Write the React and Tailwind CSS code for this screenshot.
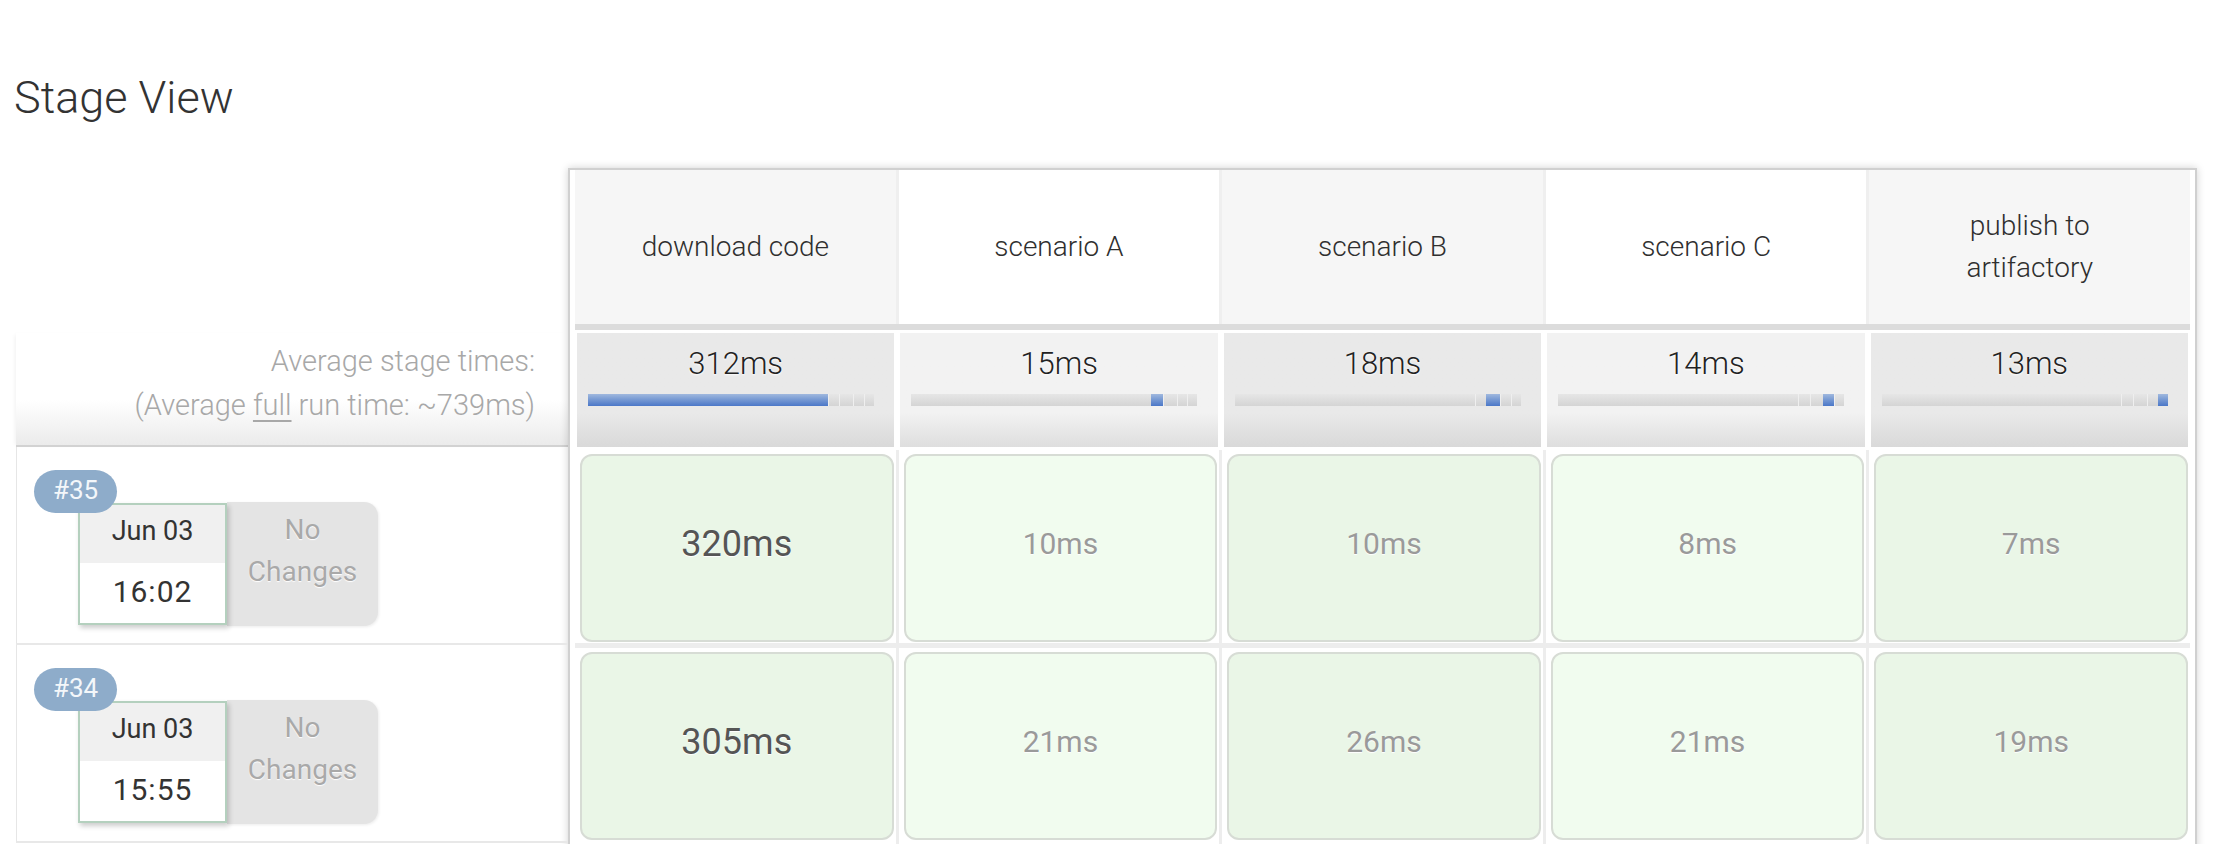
import React from "react";

const stages = [["download code"], ["scenario A"], ["scenario B"], ["scenario C"], ["publish to", "artifactory"]];
const avgs = [312, 15, 18, 14, 13];
const avgLabels = ["312ms", "15ms", "18ms", "14ms", "13ms"];
const total = avgs.reduce((a, b) => a + b, 0);

const runs = [
  { id: "#35", date: "Jun 03", time: "16:02", vals: ["320ms", "10ms", "10ms", "8ms", "7ms"], h: "h-[193px]", pb: "pb-[1px]" },
  { id: "#34", date: "Jun 03", time: "15:55", vals: ["305ms", "21ms", "26ms", "21ms", "19ms"], h: "h-[198px]", pb: "pb-[6px]" },
];

function Bar({ index }) {
  return (
    <div className="mt-[15px] ml-[11px] w-[286px] h-[12px] flex overflow-hidden">
      {avgs.map((v, i) => (
        <div
          key={i}
          style={{ width: `${(v / total) * 100}%` }}
          className={
            i === index
              ? "h-full bg-linear-to-b from-[#a0b8de] via-[#7497d2] to-[#4b77c8]"
              : i === 0
              ? "h-full bg-linear-to-b from-[#e6e6e6] to-[#d4d4d4]"
              : "h-full border-l border-[#efefef] bg-linear-to-b from-[#e6e6e6] to-[#d4d4d4]"
          }
        />
      ))}
    </div>
  );
}

function LeftRow({ run }) {
  return (
    <div className="relative h-[198px] border-l border-[#e6e6e6] border-b-2 border-b-[#e8e8e8]">
      <div className="flex ml-[61px] mt-[56px]">
        <div className="w-[149px] h-[122px] border-2 border-[#b4d0be] flex flex-col shadow-[2px_3px_5px_rgba(0,0,0,0.2)] relative z-10 bg-white">
          <div className="h-[58px] bg-[#f0f0f0] flex items-center justify-center pb-[5px] text-[27px] leading-[27px] text-[#333]">
            {run.date}
          </div>
          <div className="flex-1 bg-white flex items-center justify-center pb-[3px] text-[30px] leading-[30px] tracking-[1px] text-[#333]">
            {run.time}
          </div>
        </div>
        <div className="w-[151px] h-[124px] -mt-[1px] bg-[#e4e4e4] rounded-r-[14px] pt-[7px] text-center text-[28px] leading-[42px] text-[#a9a9a9] [text-shadow:0_1px_1px_#ffffff] shadow-[1px_1px_3px_rgba(0,0,0,0.08)]">
          No
          <br />
          Changes
        </div>
      </div>
      <div className="absolute left-[17px] top-[23px] z-20 w-[83px] h-[43px] rounded-full bg-[#8eacca] flex items-center justify-center pb-[4px] text-[26px] leading-[26px] text-[#f4f7fa]">
        {run.id}
      </div>
    </div>
  );
}

export default function App() {
  return (
    <div className="w-[2234px] h-[844px] overflow-hidden bg-white text-[#333] [font-family:Roboto,'Liberation_Sans',sans-serif]">
      <h1 className="mt-[76px] mb-[48px] ml-[14px] h-[44px] text-[45px] leading-[44px] font-light text-[#333]">
        Stage View
      </h1>
      <div className="flex pl-[16px]">
        <div className="w-[552px] flex flex-col">
          <div className="h-[165px]" />
          <div className="h-[114px] border-b-2 border-[#d2d2d2] bg-linear-to-b from-white from-60% to-[#ebebeb] pt-[6px] pr-[33px] text-right text-[29px] leading-[44px] font-light text-[#a8a8a8] shadow-[-3px_0_4px_-2px_rgba(0,0,0,0.06)]">
            <div>Average stage times:</div>
            <div>
              (Average <span className="underline underline-offset-[5px] decoration-[1.5px]">full</span> run time: ~739ms)
            </div>
          </div>
          {runs.map((r) => (
            <LeftRow key={r.id} run={r} />
          ))}
        </div>

        <div className="w-[1629px] h-[700px] border-2 border-b-0 border-[#d0d0d0] px-[5px] bg-white shadow-[0_0_8px_rgba(0,0,0,0.18)]">
          <div className="grid grid-cols-5 gap-x-[3px] bg-[#efefef] h-[154px]">
            {stages.map((s, i) => (
              <div
                key={i}
                className={`${i % 2 === 0 ? "bg-[#f6f6f6]" : "bg-white"} flex flex-col items-center justify-center text-[28px] leading-[42px] font-light text-[#2f2f2f]`}
              >
                {s.map((line) => (
                  <div key={line}>{line}</div>
                ))}
              </div>
            ))}
          </div>
          <div className="h-[6px] bg-[#dcdcdc]" />
          <div className="h-[3px] bg-white" />
          <div className="grid grid-cols-5 gap-x-[6px] px-[2px] h-[114px]">
            {avgLabels.map((a, i) => (
              <div
                key={i}
                className={`${
                  i % 2 === 0 ? "from-[#e9e9e9] to-[#d9d9d9]" : "from-[#f2f2f2] to-[#dedede]"
                } bg-linear-to-b from-70% pt-[15px]`}
              >
                <div className="text-center text-[31px] leading-[31px] font-light text-[#222] [text-shadow:0_1px_2px_#ffffff]">{a}</div>
                <Bar index={i} />
              </div>
            ))}
          </div>
          <div className="h-[3px] bg-white" />
          {runs.map((r, ri) => (
            <React.Fragment key={r.id}>
              {ri > 0 && <div className="h-[5px] bg-[#ededed]" />}
              <div className={`grid grid-cols-5 gap-x-[3px] bg-[#ededed] ${r.h}`}>
                {r.vals.map((v, i) => (
                  <div key={i} className={`bg-white pt-[4px] ${r.pb} pl-[5px] pr-[2px]`}>
                    <div
                      className={`h-full rounded-[12px] border-2 border-[#d7dcd5] ${
                        i % 2 === 0 ? "bg-[#eaf6e7]" : "bg-[#f1fcef]"
                      } flex items-center justify-center pb-[8px] [text-shadow:0_1px_1px_#ffffff] ${
                        i === 0 ? "text-[36px] leading-[36px] text-[#555]" : "text-[30px] leading-[30px] text-[#9a9a9a]"
                      }`}
                    >
                      {v}
                    </div>
                  </div>
                ))}
              </div>
            </React.Fragment>
          ))}
        </div>
      </div>
    </div>
  );
}
